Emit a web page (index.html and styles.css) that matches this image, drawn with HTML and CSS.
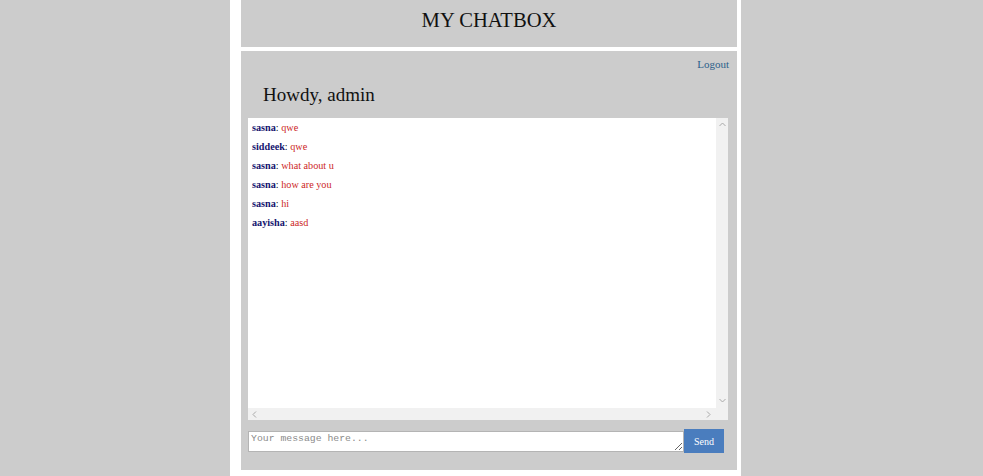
FILE: index.html
```html
<!DOCTYPE html>
<html>
<head>
<meta charset="utf-8">
<title>My Chatbox</title>
<link rel="stylesheet" href="styles.css">
</head>
<body>
<div class="wrap">
  <header class="head">MY CHATBOX</header>
  <main class="main">
    <div class="logout-row"><a class="logout" href="#">Logout</a></div>
    <h2 class="howdy">Howdy, admin</h2>
    <div class="chat">
      <div class="msgs">
        <div class="line"><b class="name">sasna</b>: <span class="text">qwe</span></div>
        <div class="line"><b class="name">siddeek</b>: <span class="text">qwe</span></div>
        <div class="line"><b class="name">sasna</b>: <span class="text">what about u</span></div>
        <div class="line"><b class="name">sasna</b>: <span class="text">how are you</span></div>
        <div class="line"><b class="name">sasna</b>: <span class="text">hi</span></div>
        <div class="line"><b class="name">aayisha</b>: <span class="text">aasd</span></div>
      </div>
      <div class="vbar">
        <svg class="arr" width="7" height="5" viewBox="0 0 7 5"><polyline points="0.5,4 3.5,1 6.5,4" fill="none" stroke="#a8a8a8" stroke-width="1"/></svg>
        <svg class="arr" width="7" height="5" viewBox="0 0 7 5"><polyline points="0.5,1 3.5,4 6.5,1" fill="none" stroke="#a8a8a8" stroke-width="1"/></svg>
      </div>
      <div class="hbar">
        <svg class="arr" width="5" height="7" viewBox="0 0 5 7"><polyline points="4,0.5 1,3.5 4,6.5" fill="none" stroke="#a8a8a8" stroke-width="1"/></svg>
        <svg class="arr" width="5" height="7" viewBox="0 0 5 7"><polyline points="1,0.5 4,3.5 1,6.5" fill="none" stroke="#a8a8a8" stroke-width="1"/></svg>
      </div>
      <div class="corner"></div>
    </div>
    <form class="send-row" onsubmit="return false;">
      <textarea class="input" placeholder="Your message here..."></textarea>
      <button class="send" type="submit">Send</button>
    </form>
  </main>
</div>
</body>
</html>
```

FILE: styles.css
```css
html, body {
  margin: 0;
  padding: 0;
}
body {
  background: #cccccc;
  font-family: "Liberation Serif", "Times New Roman", serif;
  color: #111;
  height: 476px;
  overflow: hidden;
}
.wrap {
  width: 496px;
  margin-left: 230px;
  background: #ffffff;
  padding: 0 4px 6px 11px;
  height: 470px;
  display: flex;
  flex-direction: column;
  gap: 4px;
}
.head {
  background: #cccccc;
  height: 47px;
  box-sizing: border-box;
  text-align: center;
  font-size: 20.6px;
  line-height: 22px;
  padding-top: 9px;
  color: #111;
}
.main {
  background: #cccccc;
  flex: 1;
  padding: 6px 8px 0 7px;
  display: flex;
  flex-direction: column;
}
.logout-row {
  text-align: right;
  font-size: 11px;
  line-height: 14px;
}
.logout {
  color: #2b5f8a;
  text-decoration: none;
}
.howdy {
  margin: 13px 0 12px 15px;
  font-size: 19px;
  line-height: 22px;
  font-weight: normal;
  color: #111;
}
.chat {
  width: 480px;
  height: 302px;
  background: #ffffff;
  display: grid;
  grid-template-columns: 1fr 12px;
  grid-template-rows: 1fr 12px;
}
.msgs {
  padding-left: 4px;
  font-size: 10.2px;
  line-height: 19px;
  color: #111;
}
.name {
  color: #14146e;
}
.text {
  color: #cc1f1f;
}
.vbar {
  background: #f1f1f1;
  display: flex;
  flex-direction: column;
  justify-content: space-between;
  align-items: center;
  padding: 4px 0 5px;
}
.hbar {
  background: #f1f1f1;
  display: flex;
  justify-content: space-between;
  align-items: center;
  padding: 0 5px 0 4px;
}
.corner {
  background: #f1f1f1;
}
.arr {
  display: block;
}
.send-row {
  margin: 9px 0 0 0;
  display: flex;
  align-items: center;
  width: 476px;
}
.input {
  flex: 1;
  height: 21px;
  box-sizing: border-box;
  margin: 0;
  border: 1px solid #b4b4b4;
  background: #fff;
  font-family: "Liberation Mono", "Courier New", monospace;
  font-size: 9.8px;
  line-height: 12px;
  padding: 1px 2px;
  resize: vertical;
}
.input::placeholder {
  color: #8a8a8a;
}
.send {
  width: 40px;
  height: 24px;
  margin: 0;
  border: none;
  background: #4a7dbe;
  color: #ffffff;
  font-family: "Liberation Serif", "Times New Roman", serif;
  font-size: 10px;
  padding: 0;
}
```
